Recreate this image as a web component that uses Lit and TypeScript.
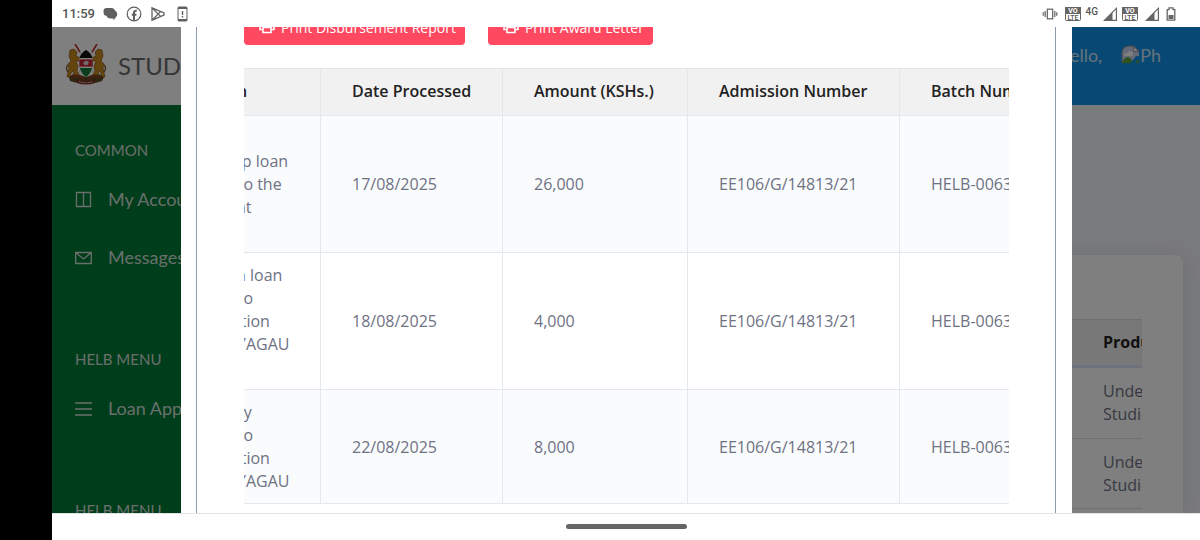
import {html, css, svg, LitElement} from 'lit';
import {customElement} from 'lit/decorators.js';

const volteIcon = svg`
  <rect x="0.5" y="0.5" width="15" height="13" rx="1" fill="#fff" stroke="#666"/>
  <rect x="0" y="0" width="16" height="7" fill="#666"/>
  <text x="8" y="6" font-size="7" font-weight="700" fill="#fff" text-anchor="middle">VO</text>
  <text x="8" y="13" font-size="7" font-weight="500" fill="#555" text-anchor="middle">LTE</text>
`;

const signalIcon = svg`
  <path d="M13.4 1.4V13.4H1.4Z" fill="none" stroke="#666" stroke-width="1.2"/>
  <path d="M9.5 5V13.5H1Z" fill="#666"/>
`;

const printerIcon = html`
  <svg class="printer" viewBox="0 0 16 16" fill="none" stroke="#fff" stroke-width="1.6">
    <path d="M4 6V2H12V6M4 10.5H1V6H15V10.5H12M4 8.5H12V13.5H4Z"/>
  </svg>
`;

@customElement('status-bar')
export class StatusBar extends LitElement {
  static styles = css`
    :host {
      display: flex;
      justify-content: space-between;
      align-items: center;
      height: 27px;
      padding: 0 24px 0 10px;
      box-sizing: border-box;
      background-color: #fff;
      color: #555;
      font-family: Roboto, sans-serif;
    }

    .group {
      display: flex;
      align-items: center;
    }

    .left {
      gap: 8px;
    }

    .right {
      gap: 5px;
    }

    .time {
      font-size: 13px;
      font-weight: 500;
    }

    .network {
      padding-bottom: 4px;
      font-size: 10px;
      line-height: 10px;
      font-weight: 500;
    }

    svg {
      display: block;
    }

    .spaced {
      margin-left: 2px;
    }
  `;

  render () {
    return html`
      <div class="group left">
        <span class="time">11:59</span>
        <svg width="15" height="16" viewBox="0 0 15 16" fill="#5f5f5f">
          <path d="M4 2H9A3.5 3.5 0 0 1 12 4.5A4 4 0 0 1 13 11L10.5 14.5V12.5H7A4 4 0 0 1 3.4 9.8L1 9L0.5 5.5A3.4 3.4 0 0 1 4 2Z"/>
        </svg>
        <svg width="16" height="16" viewBox="0 0 16 16" fill="none" stroke="#5f5f5f">
          <circle cx="8" cy="8" r="6.8" stroke-width="1.2"/>
          <path d="M8 14.6V6.6Q8 4.4 10.8 4.8M5.8 8.8H10.4" stroke-width="2"/>
        </svg>
        <svg width="16" height="16" viewBox="0 0 16 16" fill="none" stroke="#5f5f5f" stroke-width="1.3">
          <path d="M2 1.8L14 7V9L2 14.2ZM2 1.8L10.5 10.4M2 14.2L10.5 5.6"/>
        </svg>
        <svg width="16" height="16" viewBox="0 0 16 16">
          <rect x="4" y="1" width="9" height="14" rx="1" fill="none" stroke="#5f5f5f"/>
          <path d="M4 2H13M4 14H13" stroke="#5f5f5f" stroke-width="2"/>
          <path d="M8.5 5V9M8.5 10V11.5" stroke="#5f5f5f" stroke-width="1.4"/>
        </svg>
      </div>
      <div class="group right">
        <svg width="16" height="14" viewBox="0 0 18 14" fill="none" stroke="#666" stroke-width="1.4">
          <rect x="6" y="1.6" width="6" height="10.8"/>
          <path d="M3.6 3.5V10.5M1.4 5V9M14.4 3.5V10.5M16.6 5V9"/>
        </svg>
        <svg class="spaced" width="16" height="14" viewBox="0 0 16 14">${volteIcon}</svg>
        <span class="network">4G</span>
        <svg width="14" height="14" viewBox="0 0 14 14">${signalIcon}</svg>
        <svg width="16" height="14" viewBox="0 0 16 14">${volteIcon}</svg>
        <svg class="spaced" width="14" height="14" viewBox="0 0 14 14">${signalIcon}</svg>
        <svg class="spaced" width="10" height="14" viewBox="0 0 10 14">
          <path d="M1.2 2.6H3V0.8H7V2.6H8.8V13.2H1.2Z" fill="none" stroke="#666" stroke-width="1.3"/>
          <rect x="2.5" y="8" width="5" height="4" fill="#666"/>
        </svg>
      </div>
    `;
  }
}

@customElement('portal-page')
export class PortalPage extends LitElement {
  static styles = css`
    :host {
      display: grid;
      grid-template-columns: 250px 1fr;
      grid-template-rows: 78px 1fr;
      height: 100%;
      background-color: #f3f4f8;
      color: #6e7283;
      font-family: "Open Sans", sans-serif;
      overflow: hidden;
    }

    .brand {
      display: flex;
      align-items: center;
      gap: 12px;
      padding: 0 0 2px 14px;
      background-color: #fff;
      color: #6b6b6b;
      font-family: Lato, sans-serif;
      font-size: 24px;
    }

    .topbar {
      display: flex;
      align-items: center;
      justify-content: flex-end;
      gap: 19px;
      padding: 0 39px 22px 0;
      background-color: #0e92e8;
      color: #cfe4f6;
      font-family: Lato, sans-serif;
      font-size: 18px;
    }

    .photo {
      display: flex;
      align-items: center;
    }

    .sidebar {
      padding: 25px 0 0 23px;
      background-color: #007a37;
      color: #d2dfd6;
      font-family: Lato, sans-serif;
      overflow: hidden;
    }

    .section {
      margin-bottom: 53px;
    }

    .section h2 {
      margin: 0;
      font-size: 15px;
      font-weight: 400;
      line-height: 40px;
    }

    .section a {
      display: flex;
      align-items: center;
      gap: 16px;
      height: 58px;
      color: inherit;
      font-size: 18px;
      text-decoration: none;
      white-space: nowrap;
    }

    .content {
      padding: 150px 17px 0;
      overflow: hidden;
    }

    .card {
      height: 100%;
      padding: 64px 41px 0;
      box-sizing: border-box;
      border-radius: 8px 8px 0 0;
      background-color: #fff;
      box-shadow: 0 0 16px rgba(60, 70, 120, 0.12);
    }

    .scroller {
      overflow: hidden;
    }

    table {
      width: calc(100% + 61px);
      table-layout: fixed;
      border-collapse: separate;
      border-spacing: 0;
      font-size: 16px;
      line-height: 23px;
      text-align: left;
    }

    th,
    td {
      padding: 0 0 0 32px;
      border-top: 1px solid #dcdfe6;
      box-sizing: border-box;
    }

    th {
      height: 49px;
      border-bottom: 3px solid #dfe3f8;
      background-color: #f1f1f1;
      color: #222;
      font-weight: 700;
    }

    td {
      height: 70px;
    }

    tr:first-child td {
      border-top: none;
    }

    .product {
      width: 132px;
    }
  `;

  render () {
    return html`
      <div class="brand">
        <svg width="40" height="42" viewBox="0 0 40 42">
          <path d="M9 1L29 31M31 1L11 31" stroke="#dcc9b0" stroke-width="1"/>
          <path d="M9 0L14 8M31 0L26 8" stroke="#c22f2f" stroke-width="1.6"/>
          <path d="M3 33Q8 28 14 31L20 33L26 31Q32 28 38 33L36 37Q28 40 20 39Q12 40 4 37Z" fill="#5c4a22"/>
          <path d="M5 34Q12 30 18 35M22 35Q28 30 35 34" stroke="#a23a28" stroke-width="1.4" fill="none"/>
          <g fill="#c98b1d" stroke="#7c4b10" stroke-width="0.6">
            <path d="M4 6L8 5L11 8L10 12L15 14L14 17L10 17L12 22L11 27L13 31H7L8 26L5 29L4 33H1L3 24L2 20L5 17L3 12Z"/>
            <path d="M36 6L32 5L29 8L30 12L25 14L26 17L30 17L28 22L29 27L27 31H33L32 26L35 29L36 33H39L37 24L38 20L35 17L37 12Z"/>
            <path d="M2 28Q-1 24 2 21M38 28Q41 24 38 21" fill="none" stroke-width="1.2"/>
          </g>
          <path d="M20 6Q26 9 27 19Q26 29 20 33Q14 29 13 19Q14 9 20 6Z" fill="#187a3b"/>
          <path d="M20 6Q25 9 26.4 14H13.6Q15 9 20 6Z" fill="#111"/>
          <path d="M13.4 14H26.6L27 19L26.6 24H13.4L13 19Z" fill="#fff"/>
          <path d="M13.3 15.4H26.7V22.6H13.3Z" fill="#c72634"/>
          <path d="M17 19L20 16.5L23 18L21.5 21H18.5Z" fill="#ddd"/>
          <path d="M11 35Q20 38 29 35V39Q20 42 11 39Z" fill="#7c3324"/>
          <path d="M13 37.5Q20 40 27 37.5" stroke="#ddd" fill="none" stroke-dasharray="1.5 0.8"/>
        </svg>
        STUDENT
      </div>
      <header class="topbar">
        <span>Hello,</span>
        <span class="photo">
          <svg width="19" height="20" viewBox="0 0 19 20">
            <path d="M1 14V7Q2 1 8 1H13L18 6V11L15 11L12 15L8 18L1 18Z" fill="#c9d5ee"/>
            <path d="M3 11Q3 8 6 8Q8 5 11 7Q13 9 11 11Z" fill="#fff"/>
            <path d="M1 18Q2 13 7 12Q11 13 11 17L8 18.5Z" fill="#5ba536"/>
            <path d="M12 1L18 6.5H13Z" fill="#fff" stroke="#777" stroke-width="0.7"/>
            <path d="M14 18L18 14V18Z" fill="#5ba536"/>
            <path d="M1 18V7Q2 1 8 1H13" stroke="#888" stroke-width="0.8" fill="none"/>
          </svg>
          Ph
        </span>
      </header>
      <nav class="sidebar">
        <div class="section">
          <h2>COMMON</h2>
          <a href="#account">
            <svg width="17" height="17" viewBox="0 0 17 17" fill="none" stroke="currentColor" stroke-width="1.3">
              <path d="M1.5 1.5H15.5V15.5H1.5ZM8.5 1.5V15.5"/>
            </svg>
            My Account
          </a>
          <a href="#messages">
            <svg width="17" height="17" viewBox="0 0 17 17" fill="none" stroke="currentColor" stroke-width="1.3">
              <path d="M0.7 3.5H16.3V14.5H0.7ZM0.7 3.5L8.5 10L16.3 3.5"/>
            </svg>
            Messages
          </a>
        </div>
        <div class="section">
          <h2>HELB MENU</h2>
          <a href="#loans">
            <svg width="17" height="17" viewBox="0 0 17 17" fill="none" stroke="currentColor" stroke-width="1.3">
              <path d="M0 3H17M0 9H17M0 15H17"/>
            </svg>
            Loan Application
          </a>
        </div>
        <div class="section">
          <h2>HELB MENU</h2>
        </div>
      </nav>
      <main class="content">
        <div class="card">
          <div class="scroller">
            <table>
              <thead>
                <tr><th></th><th class="product">Product</th></tr>
              </thead>
              <tbody>
                <tr><td></td><td>Undergraduate Studies</td></tr>
                <tr><td></td><td>Undergraduate Studies</td></tr>
                <tr><td></td><td></td></tr>
              </tbody>
            </table>
          </div>
        </div>
      </main>
    `;
  }
}

@customElement('disbursement-modal')
export class DisbursementModal extends LitElement {
  static styles = css`
    :host {
      display: block;
      padding: 0 16px 0 15px;
      box-sizing: border-box;
      background-color: #fff;
      color: #6e7283;
      font-family: "Open Sans", sans-serif;
      overflow: hidden;
    }

    .frame {
      padding: 24px 46px 48px 47px;
      border: solid #8f9bab;
      border-width: 0 1px;
    }

    .actions {
      display: flex;
      gap: 23px;
      margin-bottom: 23px;
    }

    button {
      display: flex;
      align-items: center;
      gap: 6px;
      height: 34px;
      padding: 0 9px 2px 15px;
      border: none;
      border-radius: 4px;
      background-color: #ff4961;
      color: #fff;
      font-family: inherit;
      font-size: 14px;
    }

    .printer {
      width: 16px;
      height: 16px;
    }

    .scroller {
      overflow: hidden;
    }

    table {
      width: 960px;
      table-layout: fixed;
      border-collapse: separate;
      border-spacing: 0;
      border-top: 1px solid #e3e6ea;
      font-size: 16px;
      line-height: 23px;
      text-align: left;
    }

    th,
    td {
      padding: 11px 29px 11px 31px;
      border: solid #e3e8ef;
      border-width: 0 1px 1px 0;
    }

    th {
      padding-bottom: 12px;
      background-color: #f1f1f1;
      color: #222;
      font-weight: 600;
      white-space: nowrap;
    }

    td {
      padding-bottom: 10px;
    }

    tbody tr:nth-child(odd) {
      background-color: #fafbfd;
    }

    .tall td {
      height: 115px;
    }

    .reason {
      width: 97px;
    }

    .date {
      width: 121px;
    }

    .amount {
      width: 124px;
    }

    .admission {
      width: 151px;
    }
  `;

  private rows = [
    {reason: 'Upkeep loan given to the student', date: '17/08/2025', amount: '26,000', tall: true},
    {reason: 'Tuition loan given to institution MON YAGAU UNIV', date: '18/08/2025', amount: '4,000', tall: true},
    {reason: 'Bursary given to institution MON YAGAU', date: '22/08/2025', amount: '8,000', tall: false},
  ];

  firstUpdated () {
    this.scrollTop = 40;
    this.renderRoot.querySelector('.scroller')!.scrollLeft = 81;
  }

  render () {
    return html`
      <div class="frame">
        <div class="actions">
          <button type="button">${printerIcon}Print Disbursement Report</button>
          <button type="button">${printerIcon}Print Award Letter</button>
        </div>
        <div class="scroller">
          <table>
            <thead>
              <tr>
                <th class="reason">Option</th>
                <th class="date">Date Processed</th>
                <th class="amount">Amount (KSHs.)</th>
                <th class="admission">Admission Number</th>
                <th>Batch Number</th>
              </tr>
            </thead>
            <tbody>
              ${this.rows.map(row => html`
                <tr class=${row.tall ? 'tall' : ''}>
                  <td>${row.reason}</td>
                  <td>${row.date}</td>
                  <td>${row.amount}</td>
                  <td>EE106/G/14813/21</td>
                  <td>HELB-00630</td>
                </tr>
              `)}
            </tbody>
          </table>
        </div>
      </div>
    `;
  }
}

@customElement('app-root')
export class AppRoot extends LitElement {
  static styles = css`
    :host {
      display: flex;
      height: 100vh;
      padding-left: 52px;
      box-sizing: border-box;
      background-color: #000;
    }

    .screen {
      display: flex;
      flex: 1;
      flex-direction: column;
      min-width: 0;
    }

    .stage {
      position: relative;
      flex: 1;
      min-height: 0;
    }

    .backdrop {
      position: absolute;
      inset: 0;
      display: flex;
      padding: 0 128px 0 129px;
      background-color: rgba(0, 0, 0, 0.5);
    }

    disbursement-modal {
      flex: 1;
      min-width: 0;
    }

    .navbar {
      display: flex;
      align-items: center;
      justify-content: center;
      height: 27px;
      padding-bottom: 2px;
      box-sizing: border-box;
      border-top: 1px solid #e0e3e3;
      background-color: #fff;
    }

    .pill {
      width: 121px;
      height: 5px;
      border-radius: 3px;
      background-color: #666;
    }
  `;

  render () {
    return html`
      <div class="screen">
        <status-bar></status-bar>
        <div class="stage">
          <portal-page></portal-page>
          <div class="backdrop">
            <disbursement-modal role="dialog"></disbursement-modal>
          </div>
        </div>
        <div class="navbar"><div class="pill"></div></div>
      </div>
    `;
  }
}
